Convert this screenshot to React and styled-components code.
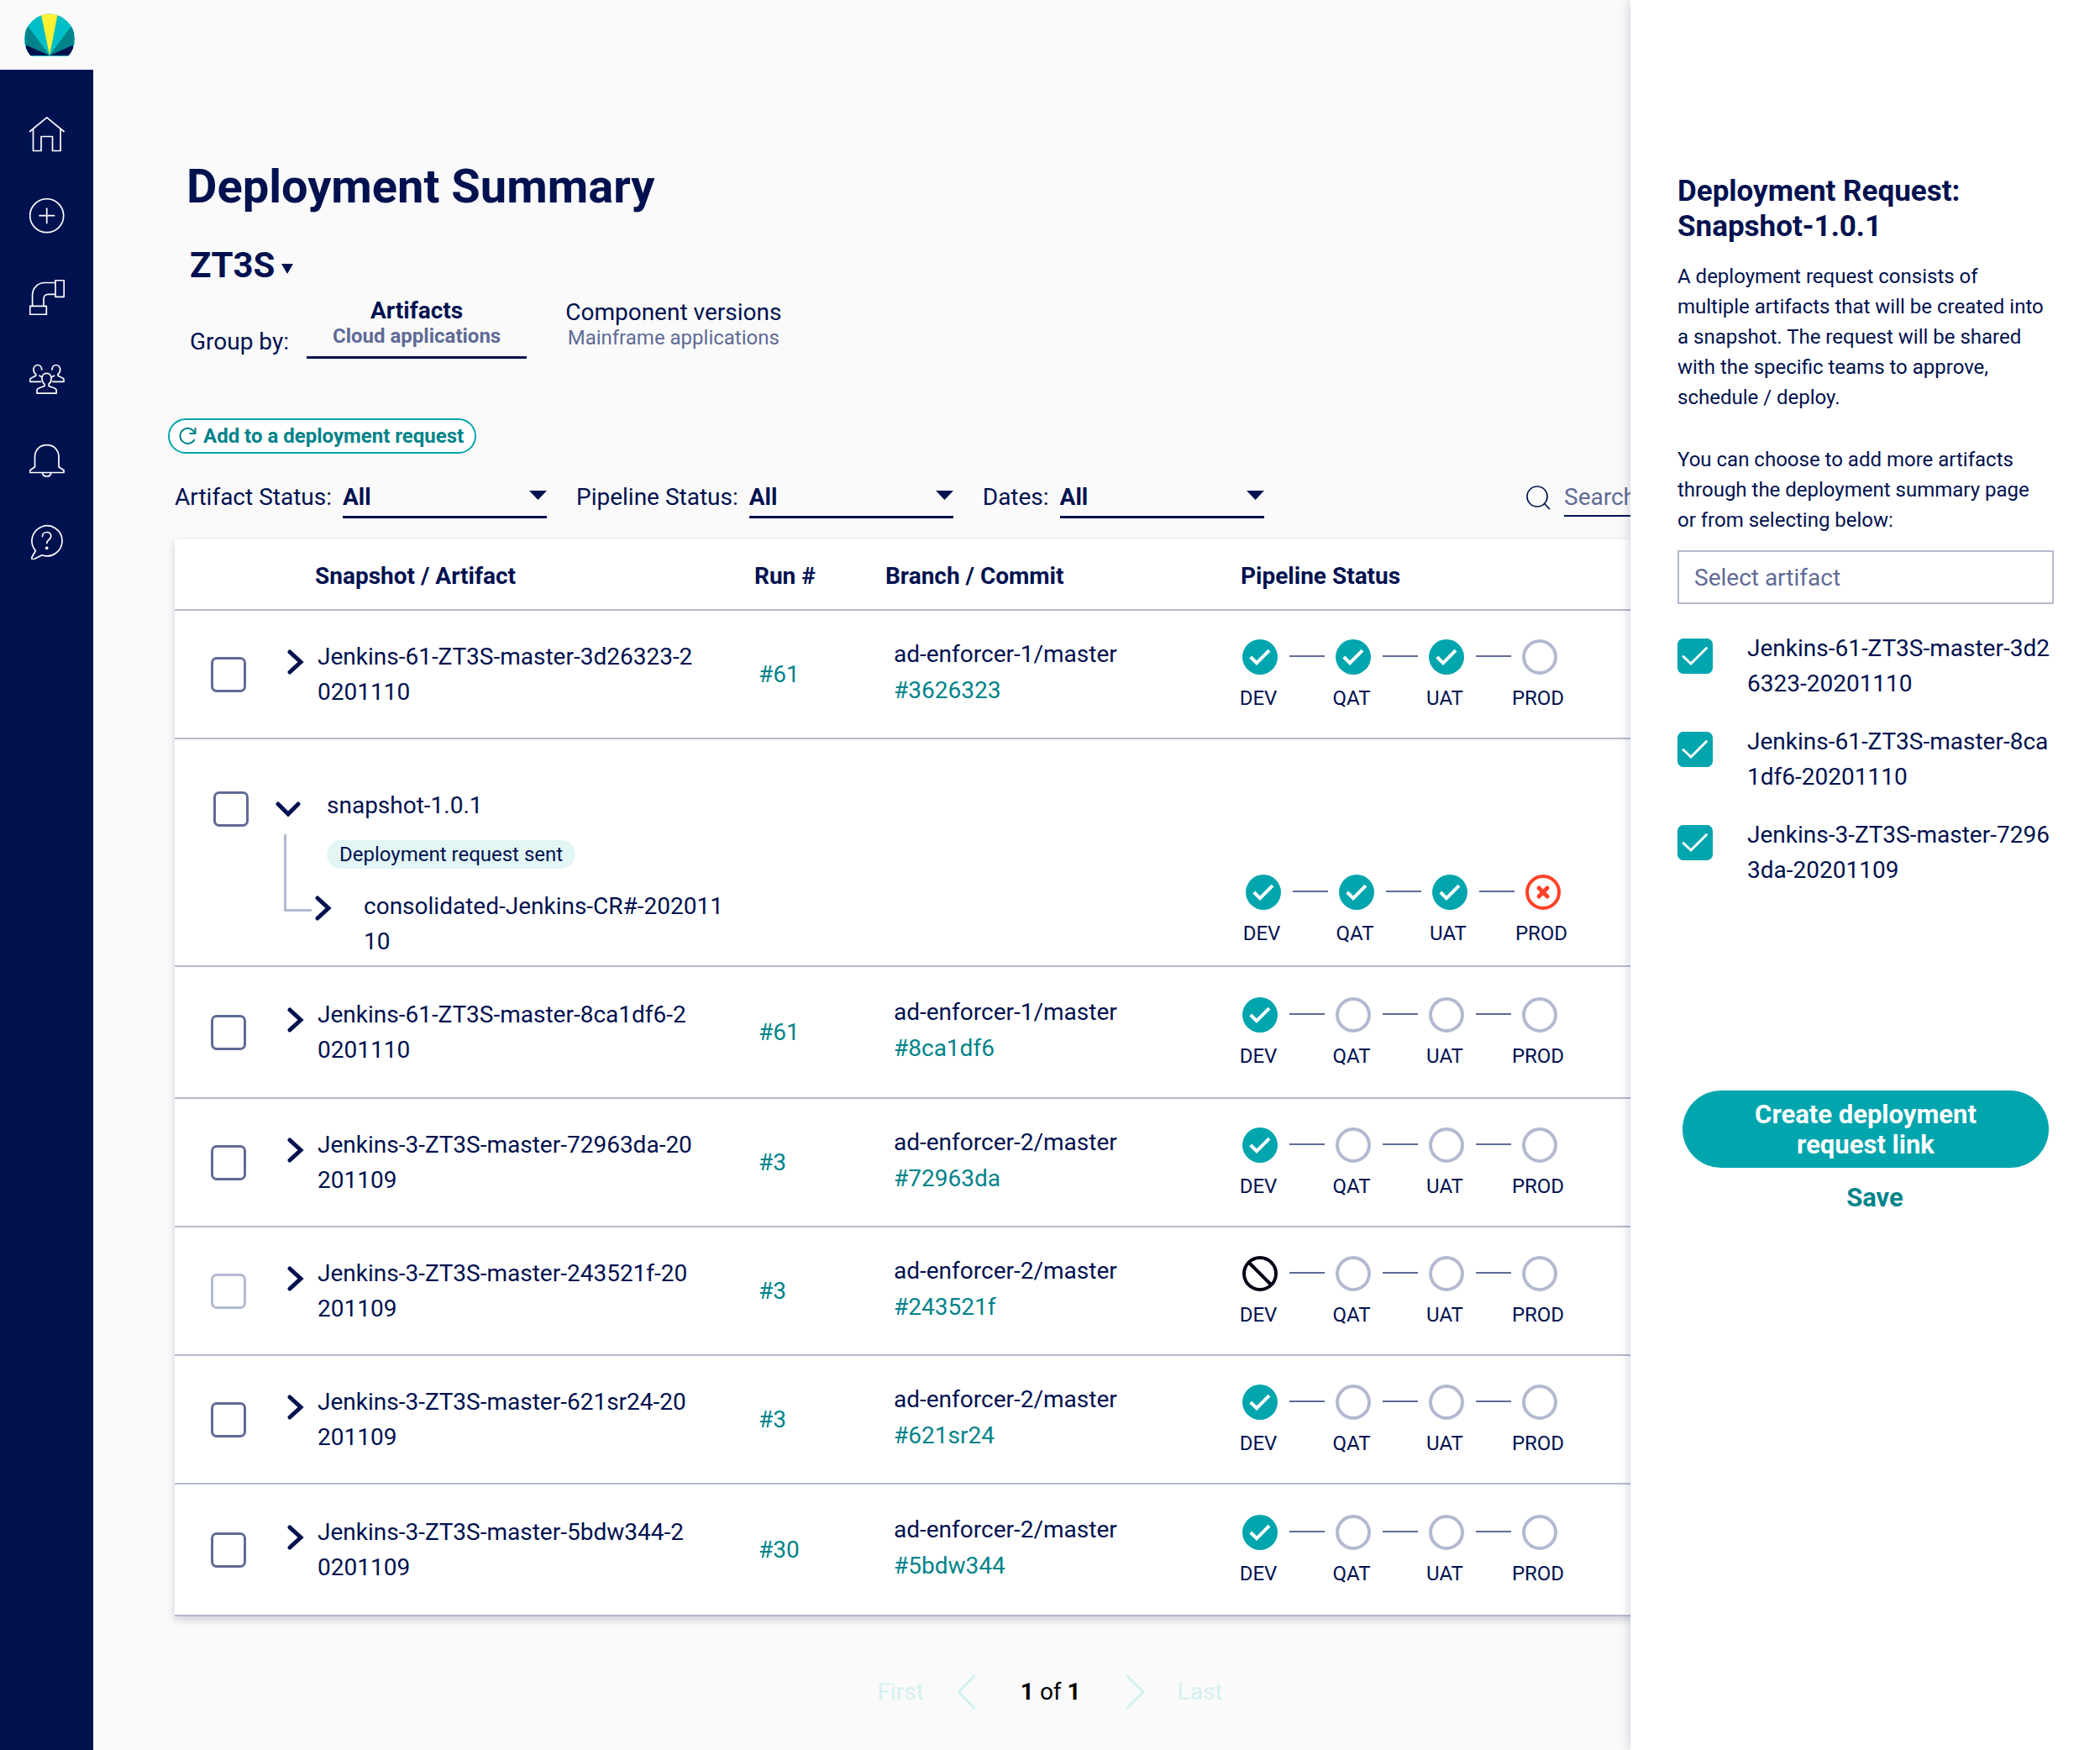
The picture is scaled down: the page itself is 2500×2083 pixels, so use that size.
import { useState } from 'react';
import styled, { createGlobalStyle, css } from 'styled-components';

const COLORS = {
  navy: '#00114f',
  slate: '#5f6b96',
  line: '#b3b9d0',
  teal: '#00a5ad',
  darkTeal: '#00838a',
  pale: '#d4f0f0',
  red: '#ff4127',
  page: '#fafafa',
};

const ROWS = [
  {
    name: 'Jenkins-61-ZT3S-master-3d26323-20201110',
    run: '#61',
    branch: 'ad-enforcer-1/master',
    commit: '#3626323',
    stages: ['done', 'done', 'done', 'empty'],
  },
  {
    name: 'snapshot-1.0.1',
    tag: 'Deployment request sent',
    child: 'consolidated-Jenkins-CR#-20201110',
    stages: ['done', 'done', 'done', 'failed'],
  },
  {
    name: 'Jenkins-61-ZT3S-master-8ca1df6-20201110',
    run: '#61',
    branch: 'ad-enforcer-1/master',
    commit: '#8ca1df6',
    stages: ['done', 'empty', 'empty', 'empty'],
    tall: true,
  },
  {
    name: 'Jenkins-3-ZT3S-master-72963da-20201109',
    run: '#3',
    branch: 'ad-enforcer-2/master',
    commit: '#72963da',
    stages: ['done', 'empty', 'empty', 'empty'],
  },
  {
    name: 'Jenkins-3-ZT3S-master-243521f-20201109',
    run: '#3',
    branch: 'ad-enforcer-2/master',
    commit: '#243521f',
    stages: ['blocked', 'empty', 'empty', 'empty'],
    disabled: true,
  },
  {
    name: 'Jenkins-3-ZT3S-master-621sr24-20201109',
    run: '#3',
    branch: 'ad-enforcer-2/master',
    commit: '#621sr24',
    stages: ['done', 'empty', 'empty', 'empty'],
  },
  {
    name: 'Jenkins-3-ZT3S-master-5bdw344-20201109',
    run: '#30',
    branch: 'ad-enforcer-2/master',
    commit: '#5bdw344',
    stages: ['done', 'empty', 'empty', 'empty'],
    tall: true,
  },
];

const STAGES = ['DEV', 'QAT', 'UAT', 'PROD'];

const SELECTED = [
  'Jenkins-61-ZT3S-master-3d26323-20201110',
  'Jenkins-61-ZT3S-master-8ca1df6-20201110',
  'Jenkins-3-ZT3S-master-72963da-20201109',
];

const FILTERS = ['Artifact Status:', 'Pipeline Status:', 'Dates:'];

const NAV = [
  {
    label: 'Home',
    icon: (
      <>
        <path d="M.5 17.5 20.7.8l20.3 16.7" />
        <path d="M4.5 14.5v26H14v-17h13.5v17H37v-26" />
      </>
    ),
  },
  {
    label: 'Add',
    icon: (
      <>
        <circle cx="20.7" cy="20.7" r="20" />
        <path d="M12 20.7h17.5M20.7 12v17.5" />
      </>
    ),
  },
  {
    label: 'Pipelines',
    icon: (
      <>
        <path d="M31 .7h10.2v19.6H31zM.7 31.3h19.6v10H.7z" />
        <path d="M3.6 31.3V18A14.5 14.5 0 0 1 18 3.5h13M17 31.3v-9a5 5 0 0 1 5-5h9" />
      </>
    ),
  },
  {
    label: 'Teams',
    icon: (
      <>
        <path d="M20.6 14.3c3.4 0 5.5 2.7 5.5 6.2 0 2.8-1.2 5.4-3 6.7v2.2c2 1.5 8.9 2 9 5v3.7H9v-3.7c.1-3 7-3.5 9-5v-2.2c-1.8-1.3-3-3.9-3-6.7 0-3.5 2.2-6.2 5.6-6.2z" />
        <path d="M13.5 24.3H.7v-2.5c0-2.3 5.5-3 7-4.6v-1.7C6 14.3 5 12.3 5 10c0-3.2 1.9-5.5 4.8-5.5s4.8 2.3 4.8 5.5" />
        <path d="M27.7 24.3H41v-2.5c0-2.3-5.5-3-7-4.6v-1.7c1.6-1.2 2.6-3.2 2.6-5.5 0-3.2-1.9-5.5-4.8-5.5S27 6.8 27 10" />
        <path d="m12 17.2 2.5 1.2M29.5 17.2 27 18.400" />
      </>
    ),
  },
  {
    label: 'Notifications',
    icon: (
      <>
        <path d="M6.5 28.7V17c0-8.5 6-14.3 14.2-14.3S35 8.5 35 17v11.7l6 4v2.8H.7v-2.8z" />
        <path d="M15.5 36c.5 2.6 2.5 4 5.2 4s4.6-1.4 5-4" />
      </>
    ),
  },
  {
    label: 'Help',
    icon: (
      <>
        <path d="M7.3 31.5A18 18 0 1 1 15 36.8l-9.5 4.7c-1.8.8-3.2-.3-2.6-2z" />
        <path d="M15.5 14.5c0-3 2.2-5 5.2-5s5 2 5 5c0 3.8-5 3.8-5 8" />
        <circle cx="20.7" cy="28.3" r="1" fill="#fff" />
      </>
    ),
  },
];

const Logo = () => (
  <svg width="60" height="51" viewBox="0 0 60 51" aria-label="Logo">
    <clipPath id="dome">
      <path d="M8 51A30 30 0 1 1 52 51z" />
    </clipPath>
    <g clipPath="url(#dome)">
      <path fill="#00bfc8" d="M0 0h60v51H0z" />
      <path fill="#fff233" d="M30 50 20 1.5Q30-1 39.5 1.5z" />
      <path fill="#00838a" d="M30 50 4 15 1 17v20zM30 50l26-35 3 2v20z" />
      <path fill={COLORS.navy} d="M30 50 2 37.5 1 50zM30 50l28-12.5L59 50z" />
    </g>
  </svg>
);

const StageIcon = ({ status }) => (
  <svg width="42" height="42" viewBox="0 0 42 42" role="img" aria-label={status}>
    {status === 'done' && (
      <>
        <circle cx="21" cy="21" r="21" fill={COLORS.teal} />
        <path d="M9.8 21 17 28.2 32 13.2" fill="none" stroke="#fff" strokeWidth="4" />
      </>
    )}
    {status === 'empty' && (
      <circle cx="21" cy="21" r="19" fill="none" stroke={COLORS.line} strokeWidth="4" />
    )}
    {status === 'failed' && (
      <g fill="none" stroke={COLORS.red} strokeLinecap="round">
        <circle cx="21" cy="21" r="19" strokeWidth="4" />
        <path d="m16 16 10 10M26 16 16 26" strokeWidth="5" />
      </g>
    )}
    {status === 'blocked' && (
      <g fill="none" stroke="#000014" strokeWidth="4">
        <circle cx="21" cy="21" r="19" />
        <path d="m8 8 26 26" />
      </g>
    )}
  </svg>
);

const Expander = ({ label, open }) => (
  <PlainButton aria-label={label} aria-expanded={!!open}>
    {open ? (
      <svg width="30" height="20" viewBox="0 0 30 20">
        <path d="m3 4 12 12L27 4" fill="none" stroke={COLORS.navy} strokeWidth="5" strokeLinecap="round" />
      </svg>
    ) : (
      <svg width="20" height="30" viewBox="0 0 20 30">
        <path d="m3 3 13 12L3 27" fill="none" stroke={COLORS.navy} strokeWidth="5" strokeLinecap="round" />
      </svg>
    )}
  </PlainButton>
);

const Pipeline = ({ stages }) => (
  <StageList>
    {stages.map((status, i) => (
      <Stage key={STAGES[i]}>
        <StageIcon status={status} />
        <StageName>{STAGES[i]}</StageName>
      </Stage>
    ))}
  </StageList>
);

const ArtifactRow = ({ row }) => (
  <Row $tall={row.tall}>
    <SelectCell>
      <CheckBox type="checkbox" aria-label={row.name} disabled={row.disabled} />
    </SelectCell>
    <NameCell>
      <NameLine>
        <Expander label={`Expand ${row.name}`} />
        <Name>{row.name}</Name>
      </NameLine>
    </NameCell>
    <RunCell>
      <Link href="#run">{row.run}</Link>
    </RunCell>
    <BranchCell>
      {row.branch}
      <Link href="#commit">{row.commit}</Link>
    </BranchCell>
    <PipelineCell>
      <Pipeline stages={row.stages} />
    </PipelineCell>
  </Row>
);

const SnapshotRow = ({ row }) => (
  <tr>
    <SelectCell $snapshot>
      <CheckBox type="checkbox" aria-label={row.name} />
    </SelectCell>
    <NameCell $snapshot colSpan={3}>
      <Tree>
        <TreeHead>
          <Expander open label={`Collapse ${row.name}`} />
          <span>{row.name}</span>
        </TreeHead>
        <Elbow />
        <Tag>{row.tag}</Tag>
        <TreeChild>
          <Expander label={`Expand ${row.child}`} />
          <Name $narrow>{row.child}</Name>
        </TreeChild>
      </Tree>
    </NameCell>
    <PipelineCell $snapshot>
      <Pipeline stages={row.stages} />
    </PipelineCell>
  </tr>
);

const Filter = ({ label }) => (
  <FilterLabel>
    {label}
    <SelectBox>
      <FilterSelect defaultValue="All">
        <option>All</option>
      </FilterSelect>
      <svg width="21" height="11" viewBox="0 0 21 11">
        <path d="M0 0h21L10.5 11z" fill={COLORS.navy} />
      </svg>
    </SelectBox>
  </FilterLabel>
);

const RequestDrawer = () => (
  <Drawer>
    <DrawerTitle>
      Deployment Request:
      <br />
      Snapshot-1.0.1
    </DrawerTitle>
    <DrawerText>
      A deployment request consists of multiple artifacts that will be created into a snapshot. The
      request will be shared with the specific teams to approve, schedule / deploy.
    </DrawerText>
    <DrawerText>
      You can choose to add more artifacts through the deployment summary page or from selecting
      below:
    </DrawerText>
    <ArtifactInput placeholder="Select artifact" aria-label="Select artifact" />
    <PickList>
      {SELECTED.map((name) => (
        <li key={name}>
          <PickLabel>
            <PickBox>
              <CheckBox type="checkbox" defaultChecked />
              <svg width="42" height="42" viewBox="0 0 42 42">
                <path d="m7 21.5 9 8.5 18.5-18.5" fill="none" stroke="#fff" strokeWidth="3" strokeLinecap="round" />
              </svg>
            </PickBox>
            <PickName>{name}</PickName>
          </PickLabel>
        </li>
      ))}
    </PickList>
    <CreateButton>
      Create deployment
      <br />
      request link
    </CreateButton>
    <SaveButton>Save</SaveButton>
  </Drawer>
);

const App = () => {
  const [tab, setTab] = useState('artifacts');

  return (
    <Page>
      <GlobalStyle />
      <Sidebar>
        <LogoBox>
          <Logo />
        </LogoBox>
        <Nav>
          {NAV.map(({ label, icon }) => (
            <NavLink key={label} href={`#${label}`} aria-label={label}>
              <svg width="42" height="42" viewBox="0 0 42 42" fill="none" stroke="#fff" strokeWidth="1.7" strokeLinejoin="round" strokeLinecap="round">
                {icon}
              </svg>
            </NavLink>
          ))}
        </Nav>
      </Sidebar>
      <Main>
        <Heading>
          <Title>Deployment Summary</Title>
          <AppPicker>
            <AppSelect aria-label="Application" defaultValue="ZT3S">
              <option>ZT3S</option>
            </AppSelect>
            <svg width="14" height="12" viewBox="0 0 14 12">
              <path d="M0 0h14L7 12z" fill={COLORS.navy} />
            </svg>
          </AppPicker>
          <GroupBy>
            <GroupLabel>Group by:</GroupLabel>
            <Tabs role="tablist">
              <Tab role="tab" $active={tab === 'artifacts'} onClick={() => setTab('artifacts')}>
                Artifacts
                <small>Cloud applications</small>
              </Tab>
              <Tab role="tab" $active={tab === 'versions'} onClick={() => setTab('versions')}>
                Component versions
                <small>Mainframe applications</small>
              </Tab>
            </Tabs>
          </GroupBy>
        </Heading>
        <AddButton>
          <svg width="21" height="22" viewBox="0 0 21 22" fill="none" stroke={COLORS.darkTeal} strokeWidth="2">
            <path d="M19.5 1v7h-7" />
            <path d="M19 8A9 9 0 1 0 18.5 15" />
          </svg>
          Add to a deployment request
        </AddButton>
        <Content>
          <Filters>
            {FILTERS.map((label) => (
              <Filter key={label} label={label} />
            ))}
            <SearchBox>
              <svg width="29" height="29" viewBox="0 0 29 29" fill="none" stroke={COLORS.navy} strokeWidth="1.7">
                <circle cx="13" cy="13" r="12" />
                <path d="m21.5 21.5 6.5 6.5" />
              </svg>
              <SearchInput type="search" placeholder="Search" aria-label="Search" />
            </SearchBox>
          </Filters>
          <Table>
            <colgroup>
              <Col $width={120} />
              <Col $width={570} />
              <Col $width={156} />
              <Col $width={423} />
              <col />
            </colgroup>
            <thead>
              <tr>
                <Th />
                <Th $indent>Snapshot / Artifact</Th>
                <Th>Run #</Th>
                <Th>Branch / Commit</Th>
                <Th>Pipeline Status</Th>
              </tr>
            </thead>
            <tbody>
              {ROWS.map((row) =>
                row.child ? (
                  <SnapshotRow key={row.name} row={row} />
                ) : (
                  <ArtifactRow key={row.name} row={row} />
                )
              )}
            </tbody>
          </Table>
          <Pagination aria-label="Pages">
            <PageButton disabled>First</PageButton>
            <PageButton disabled aria-label="Previous">
              <svg width="22" height="42" viewBox="0 0 22 42">
                <path d="M21 1 1 21l20 20" fill="none" stroke={COLORS.pale} strokeWidth="3" />
              </svg>
            </PageButton>
            <PageCount>
              <b>1</b> of <b>1</b>
            </PageCount>
            <PageButton disabled aria-label="Next">
              <svg width="22" height="42" viewBox="0 0 22 42">
                <path d="m1 1 20 20L1 41" fill="none" stroke={COLORS.pale} strokeWidth="3" />
              </svg>
            </PageButton>
            <PageButton disabled>Last</PageButton>
          </Pagination>
        </Content>
      </Main>
      <RequestDrawer />
    </Page>
  );
};
export default App;

const GlobalStyle = createGlobalStyle`
  *, *::before, *::after {
    box-sizing: border-box;
  }
  body {
    margin: 0;
    background: ${COLORS.page};
  }
  body, button, input, select {
    font-family: Roboto, "Liberation Sans", sans-serif;
    font-size: 28px;
    line-height: 42px;
    color: ${COLORS.navy};
  }
  h1, h2, p, ul, ol {
    margin: 0;
    padding: 0;
  }
  ul, ol {
    list-style: none;
  }
  svg {
    display: block;
    flex: none;
  }
`;

const Page = styled.div`
  position: relative;
  display: flex;
  min-height: 100vh;
  overflow: hidden;
`;

const PlainButton = styled.button`
  border: none;
  padding: 0;
  background: none;
  cursor: pointer;
`;

/* Sidebar */
const Sidebar = styled.aside`
  display: flex;
  flex-direction: column;
  flex: none;
  width: 111px;
`;
const LogoBox = styled.div`
  height: 83px;
  padding: 16px 0 0 29px;
`;
const Nav = styled.nav`
  display: flex;
  flex-direction: column;
  align-items: center;
  gap: 55px;
  flex: 1;
  padding-top: 56px;
  background: ${COLORS.navy};
`;
const NavLink = styled.a`
  display: block;
`;

/* Heading */
const Main = styled.main`
  flex: 1;
  min-width: 0;
  padding: 190px 208px 48px 89px;
`;
const Heading = styled.header`
  padding-left: 22px;
`;
const Title = styled.h1`
  font-size: 56px;
  line-height: 64px;
`;
const AppPicker = styled.div`
  display: flex;
  align-items: center;
  gap: 7px;
  margin-top: 38px;
  padding-left: 4px;

  svg {
    margin-top: 8px;
  }
`;
const AppSelect = styled.select`
  appearance: none;
  border: none;
  padding: 0;
  background: none;
  font-size: 42px;
  font-weight: 700;
  line-height: 48px;
`;
const GroupBy = styled.div`
  display: flex;
  align-items: flex-end;
  gap: 21px;
  margin-top: 14px;
  padding-left: 4px;
`;
const GroupLabel = styled.span`
  line-height: 40px;
`;
const Tabs = styled.div`
  display: flex;
  align-items: center;
  gap: 46px;
`;
const Tab = styled(PlainButton)`
  display: flex;
  flex-direction: column;
  padding-bottom: 10px;
  line-height: 32px;

  small {
    font-size: 24px;
    line-height: 28px;
    color: ${COLORS.slate};
  }

  ${({ $active }) =>
    $active &&
    css`
      align-items: center;
      padding: 0 31px 10px;
      border-bottom: 3px solid ${COLORS.navy};
      font-weight: 700;
    `}
`;

const AddButton = styled.button`
  display: flex;
  align-items: center;
  gap: 8px;
  height: 42px;
  margin-top: 71px;
  padding: 0 13px 0 11px;
  border: 2px solid ${COLORS.teal};
  border-radius: 21px;
  background: #fff;
  color: ${COLORS.darkTeal};
  font-size: 24px;
  font-weight: 700;
  line-height: 36px;
`;

/* Filters */
const Content = styled.div`
  padding-left: 8px;
`;
const Filters = styled.div`
  display: flex;
  gap: 35px;
  margin-top: 30px;
`;
const FilterLabel = styled.label`
  display: flex;
  flex: none;
  gap: 13px;
  line-height: 44px;
`;
const SelectBox = styled.span`
  display: grid;
  align-items: center;
  width: 243px;
  border-bottom: 3px solid ${COLORS.navy};

  > * {
    grid-area: 1 / 1;
  }
  svg {
    justify-self: end;
    margin-bottom: 6px;
    pointer-events: none;
  }
`;
const FilterSelect = styled.select`
  appearance: none;
  width: 100%;
  border: none;
  padding: 0;
  background: none;
  font-weight: 700;
  line-height: 44px;
`;
const SearchBox = styled.div`
  display: flex;
  align-items: center;
  gap: 16px;
  height: 45px;
  margin-left: auto;
`;
const SearchInput = styled.input`
  width: 430px;
  height: 45px;
  border: none;
  border-bottom: 2px solid ${COLORS.navy};
  padding: 0;
  background: none;

  &::placeholder {
    color: ${COLORS.slate};
    opacity: 1;
  }
`;

/* Table */
const Table = styled.table`
  width: 100%;
  margin-top: 25px;
  table-layout: fixed;
  border-collapse: separate;
  border-spacing: 0;
  background: #fff;
  box-shadow: 0 4px 10px rgba(0, 17, 79, 0.18);
`;
const Col = styled.col`
  width: ${({ $width }) => $width}px;
`;
const Th = styled.th`
  height: 85px;
  padding: 4px 0 0 ${({ $indent }) => ($indent ? 47 : 0)}px;
  border-bottom: 2px solid ${COLORS.line};
  text-align: left;
`;
const Row = styled.tr`
  height: ${({ $tall }) => ($tall ? 157 : 153)}px;
`;
const Td = styled.td`
  padding: 0;
  border-bottom: 2px solid ${COLORS.line};
  vertical-align: middle;
`;
const SelectCell = styled(Td)`
  padding-left: 43px;

  ${({ $snapshot }) =>
    $snapshot &&
    css`
      padding: 62px 0 0 46px;
      vertical-align: top;
    `}
`;
const NameCell = styled(Td)`
  padding-left: 14px;

  ${({ $snapshot }) => $snapshot && 'padding: 58px 0 7px;'}
`;
const RunCell = styled(Td)`
  padding-left: 5px;
`;
const BranchCell = styled(Td)`
  padding: 0 0 6px 10px;
  line-height: 43px;
`;
const PipelineCell = styled(Td)`
  padding-left: 2px;

  ${({ $snapshot }) =>
    $snapshot &&
    css`
      padding: 0 0 24px 6px;
      vertical-align: bottom;
    `}
`;
const CheckBox = styled.input`
  appearance: none;
  display: block;
  width: 42px;
  height: 42px;
  margin: 0;
  border: 3px solid ${COLORS.slate};
  border-radius: 7px;
  background: #fff;

  &:checked {
    border-color: ${COLORS.teal};
    background: ${COLORS.teal};
  }
  &:disabled {
    border-color: ${COLORS.line};
  }
`;
const NameLine = styled.div`
  display: flex;
  align-items: flex-start;
  gap: 16px;

  button {
    padding-top: 12px;
  }
`;
const Name = styled.span`
  max-width: ${({ $narrow }) => ($narrow ? 432 : 448)}px;
  word-break: break-all;
`;
const Link = styled.a`
  display: block;
  color: ${COLORS.darkTeal};
  text-decoration: none;
`;

/* Snapshot row, with its child hanging from an elbow line */
const Tree = styled.div`
  display: grid;
  grid-template-columns: 44px 1fr;
`;
const TreeHead = styled.div`
  display: flex;
  grid-column: 1 / -1;
  align-items: center;
  gap: 31px;
  height: 42px;

  button {
    padding-top: 8px;
  }
`;
const Elbow = styled.span`
  grid-row: 2 / 4;
  width: 33px;
  height: 92px;
  margin: 13px 0 0 10px;
  border: solid ${COLORS.line};
  border-width: 0 0 3px 3px;
`;
const Tag = styled.span`
  justify-self: start;
  margin: 20px 0 24px 17px;
  padding: 0 15px;
  border-radius: 17px;
  background: #e3f6f6;
  font-size: 24px;
  line-height: 34px;
`;
const TreeChild = styled.div`
  display: flex;
  align-items: flex-start;
  gap: 38px;
  padding-left: 3px;

  button {
    padding-top: 8px;
  }
`;

const StageList = styled.ol`
  display: flex;
  gap: 69px;
`;
const Stage = styled.li`
  position: relative;
  display: flex;
  flex-direction: column;
  align-items: center;
  gap: 14px;
  width: 42px;

  &:not(:last-child)::after {
    content: '';
    position: absolute;
    top: 19px;
    left: 56px;
    width: 42px;
    height: 2px;
    background: ${COLORS.slate};
  }
`;
const StageName = styled.span`
  margin-right: 4px;
  font-size: 24px;
  line-height: 28px;
`;

const Pagination = styled.nav`
  display: flex;
  justify-content: center;
  align-items: center;
  gap: 40px;
  margin-top: 69px;
`;
const PageButton = styled(PlainButton)`
  color: ${COLORS.pale};
  cursor: default;
`;
const PageCount = styled.span`
  margin: 0 13px;
  color: #000;
`;

/* Drawer lying over the right part of the page */
const Drawer = styled.aside`
  position: absolute;
  top: 0;
  right: 0;
  bottom: 0;
  width: 559px;
  padding: 207px 55px 0 56px;
  background: #fff;
  box-shadow: 0 0 14px rgba(0, 17, 79, 0.2);
`;
const DrawerTitle = styled.h2`
  margin-bottom: 20px;
  font-size: 35px;
  line-height: 42px;
`;
const DrawerText = styled.p`
  padding-right: 8px;
  font-size: 24px;
  line-height: 36px;

  & + & {
    margin-top: 38px;
  }
`;
const ArtifactInput = styled.input`
  display: block;
  width: 100%;
  height: 64px;
  margin-top: 18px;
  padding: 0 18px;
  border: 2px solid ${COLORS.line};
  background: #fff;

  &::placeholder {
    color: ${COLORS.slate};
    opacity: 1;
  }
`;
const PickList = styled.ul`
  display: grid;
  gap: 27px;
  margin-top: 32px;
`;
const PickLabel = styled.label`
  display: flex;
  align-items: flex-start;
  gap: 41px;
`;
const PickBox = styled.span`
  display: grid;
  padding-top: 9px;

  > * {
    grid-area: 1 / 1;
  }
`;
const PickName = styled.span`
  width: 364px;
  word-break: break-all;
`;
const CreateButton = styled.button`
  display: block;
  width: calc(100% - 12px);
  margin: 241px 6px 0;
  padding: 11px 10px 9px;
  border: none;
  border-radius: 46px;
  background: ${COLORS.teal};
  color: #fff;
  font-size: 31px;
  font-weight: 700;
  line-height: 36px;
`;
const SaveButton = styled(PlainButton)`
  display: block;
  margin: 15px auto 0;
  padding-left: 22px;
  color: ${COLORS.darkTeal};
  font-size: 31px;
  font-weight: 700;
`;
